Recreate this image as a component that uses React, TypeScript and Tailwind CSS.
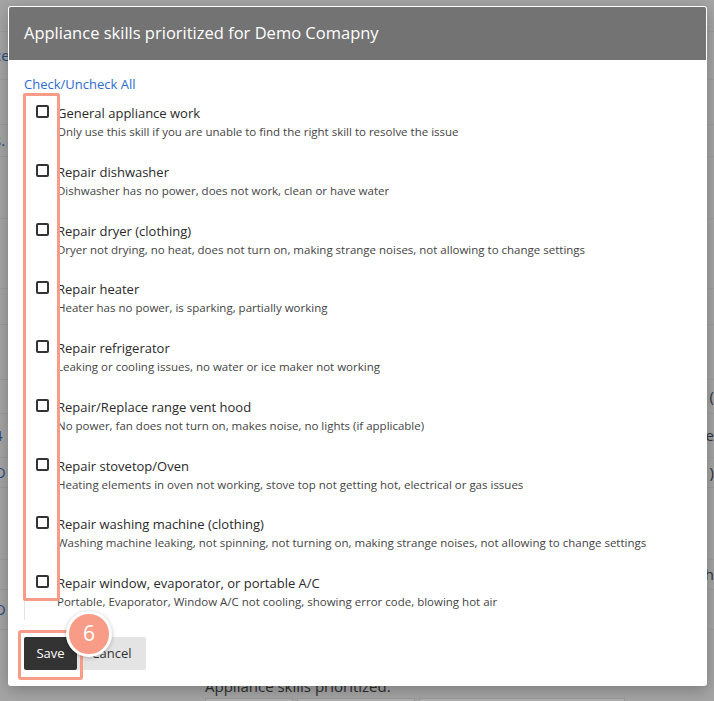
import React, { useState } from 'react';

interface Skill {
    title: string;
    description: string;
}

const skills: Skill[] = [
    { title: 'General appliance work', description: 'Only use this skill if you are unable to find the right skill to resolve the issue' },
    { title: 'Repair dishwasher', description: 'Dishwasher has no power, does not work, clean or have water' },
    { title: 'Repair dryer (clothing)', description: 'Dryer not drying, no heat, does not turn on, making strange noises, not allowing to change settings' },
    { title: 'Repair heater', description: 'Heater has no power, is sparking, partially working' },
    { title: 'Repair refrigerator', description: 'Leaking or cooling issues, no water or ice maker not working' },
    { title: 'Repair/Replace range vent hood', description: 'No power, fan does not turn on, makes noise, no lights (if applicable)' },
    { title: 'Repair stovetop/Oven', description: 'Heating elements in oven not working, stove top not getting hot, electrical or gas issues' },
    { title: 'Repair washing machine (clothing)', description: 'Washing machine leaking, not spinning, not turning on, making strange noises, not allowing to change settings' },
    { title: 'Repair window, evaporator, or portable A/C', description: 'Portable, Evaporator, Window A/C not cooling, showing error code, blowing hot air' },
];

// rows of the page that sits behind the dialog (only the edges show)
const pageRows = [
    { h: 'h-[32px]', left: '', right: '' },
    { h: 'h-[48px]', left: 'ce', right: '' },
    { h: 'h-[45px]', left: '', right: '' },
    { h: 'h-[32px]', left: 's.', right: '' },
    { h: 'h-[62px]', left: '', right: '' },
    { h: 'h-[70px]', left: '', right: '' },
    { h: 'h-[36px]', left: 'i', right: '' },
    { h: 'h-[55px]', left: '', right: '' },
    { h: 'h-[34px]', left: '', right: '(' },
    { h: 'h-[44px]', left: '4', right: 'e' },
    { h: 'h-[30px]', left: 'O', right: ')' },
    { h: 'h-[72px]', left: '', right: '' },
    { h: 'h-[30px]', left: '1', right: 'h' },
    { h: 'h-[40px]', left: 'O', right: '' },
];

const App: React.FC = () => {
    const [checked, setChecked] = useState<boolean[]>(skills.map(() => false));

    const toggle = (i: number) => {
        setChecked(checked.map((c, idx) => (idx === i ? !c : c)));
    };

    const toggleAll = () => {
        const all = checked.every((c) => c);
        setChecked(checked.map(() => !all));
    };

    return (
        <div
            className="relative w-[714px] h-[701px] overflow-hidden bg-[#a5a5a5]"
            style={{ fontFamily: '"Open Sans", "Noto Sans", sans-serif' }}
        >
            {/* background page, dimmed */}
            <div className="h-full flex flex-col">
                {pageRows.map((r, i) => (
                    <div key={i} className={`${r.h} shrink-0 flex items-center justify-between border-b border-[#9c9c9c] text-[15px]`}>
                        <span className="text-[#2b4d86] -ml-[6px]">{r.left}</span>
                        <span className="text-[#333]">{r.right}</span>
                    </div>
                ))}
                <div className="mt-auto h-[24px] shrink-0 overflow-hidden">
                    <div className="pl-[205px] text-[15px] text-[#2f2f2f] leading-[18px]">Appliance skills prioritized.</div>
                    <div className="flex gap-[4px] pl-[205px] pt-[3px]">
                        <div className="w-[88px] h-[20px] bg-[#b0b0b0] border border-[#999]" />
                        <div className="w-[118px] h-[20px] bg-[#b0b0b0] border border-[#999]" />
                        <div className="w-[206px] h-[20px] bg-[#b0b0b0] border border-[#999]" />
                    </div>
                </div>
            </div>

            {/* dialog */}
            <div className="absolute left-[8px] top-[6px] w-[699px] h-[680px] bg-white rounded-[3px] p-px shadow-[0_4px_16px_rgba(0,0,0,0.25)] flex flex-col">
                <div className="h-[53px] bg-[#737373] rounded-t-[2px] px-[15px] flex items-center">
                    <h2 className="text-[16.5px] text-white">Appliance skills prioritized for Demo Comapny</h2>
                </div>

                <div className="flex-1 flex flex-col px-[15px] pt-[16px]">
                    <button
                        type="button"
                        onClick={toggleAll}
                        className="self-start text-[13px] leading-[16px] text-[#2e6bd1]"
                    >
                        Check/Uncheck All
                    </button>

                    <div className="relative mt-[4px] h-[524px] border-l border-[#e3e3e3]">
                        {skills.map((s, i) => (
                            <label key={s.title} className="flex items-start h-[58.75px] cursor-pointer">
                                <input
                                    type="checkbox"
                                    checked={checked[i]}
                                    onChange={() => toggle(i)}
                                    className="appearance-none mt-[9px] ml-[11px] w-[13px] h-[13px] border-2 border-[#333] rounded-[2px] checked:bg-[#333] shrink-0"
                                />
                                <div className="ml-[8px] pt-[7px]">
                                    <div className="text-[13px] leading-[20px] text-[#2a2a2a]">{s.title}</div>
                                    <div className="text-[11.5px] leading-[18px] text-[#444]">{s.description}</div>
                                </div>
                            </label>
                        ))}
                        {/* highlight around checkboxes */}
                        <div className="absolute left-[-2px] top-[-3px] w-[37px] h-[508px] border-[3px] border-[#f99c87] rounded-[2px] pointer-events-none" />
                    </div>

                    <div className="relative flex mt-[17px]">
                        <button type="button" className="h-[33px] w-[53px] bg-[#333] text-white text-[13px] rounded-[2px]">
                            Save
                        </button>
                        <button type="button" className="h-[33px] w-[69px] bg-[#e4e4e4] text-[#333] text-[13px] rounded-r-[2px]">
                            Cancel
                        </button>
                        {/* highlight around Save */}
                        <div className="absolute left-[-6px] top-[-7px] w-[65px] h-[50px] border-[3px] border-[#f99c87] rounded-[3px] pointer-events-none" />
                        {/* step badge */}
                        <div className="absolute left-[42px] top-[-26px] w-[46px] h-[46px] rounded-full bg-[#f99c87] border-[3px] border-white shadow-[0_1px_4px_rgba(0,0,0,0.25)] flex items-center justify-center text-white text-[21px]">
                            6
                        </div>
                    </div>
                </div>
            </div>
        </div>
    );
};

export default App;
